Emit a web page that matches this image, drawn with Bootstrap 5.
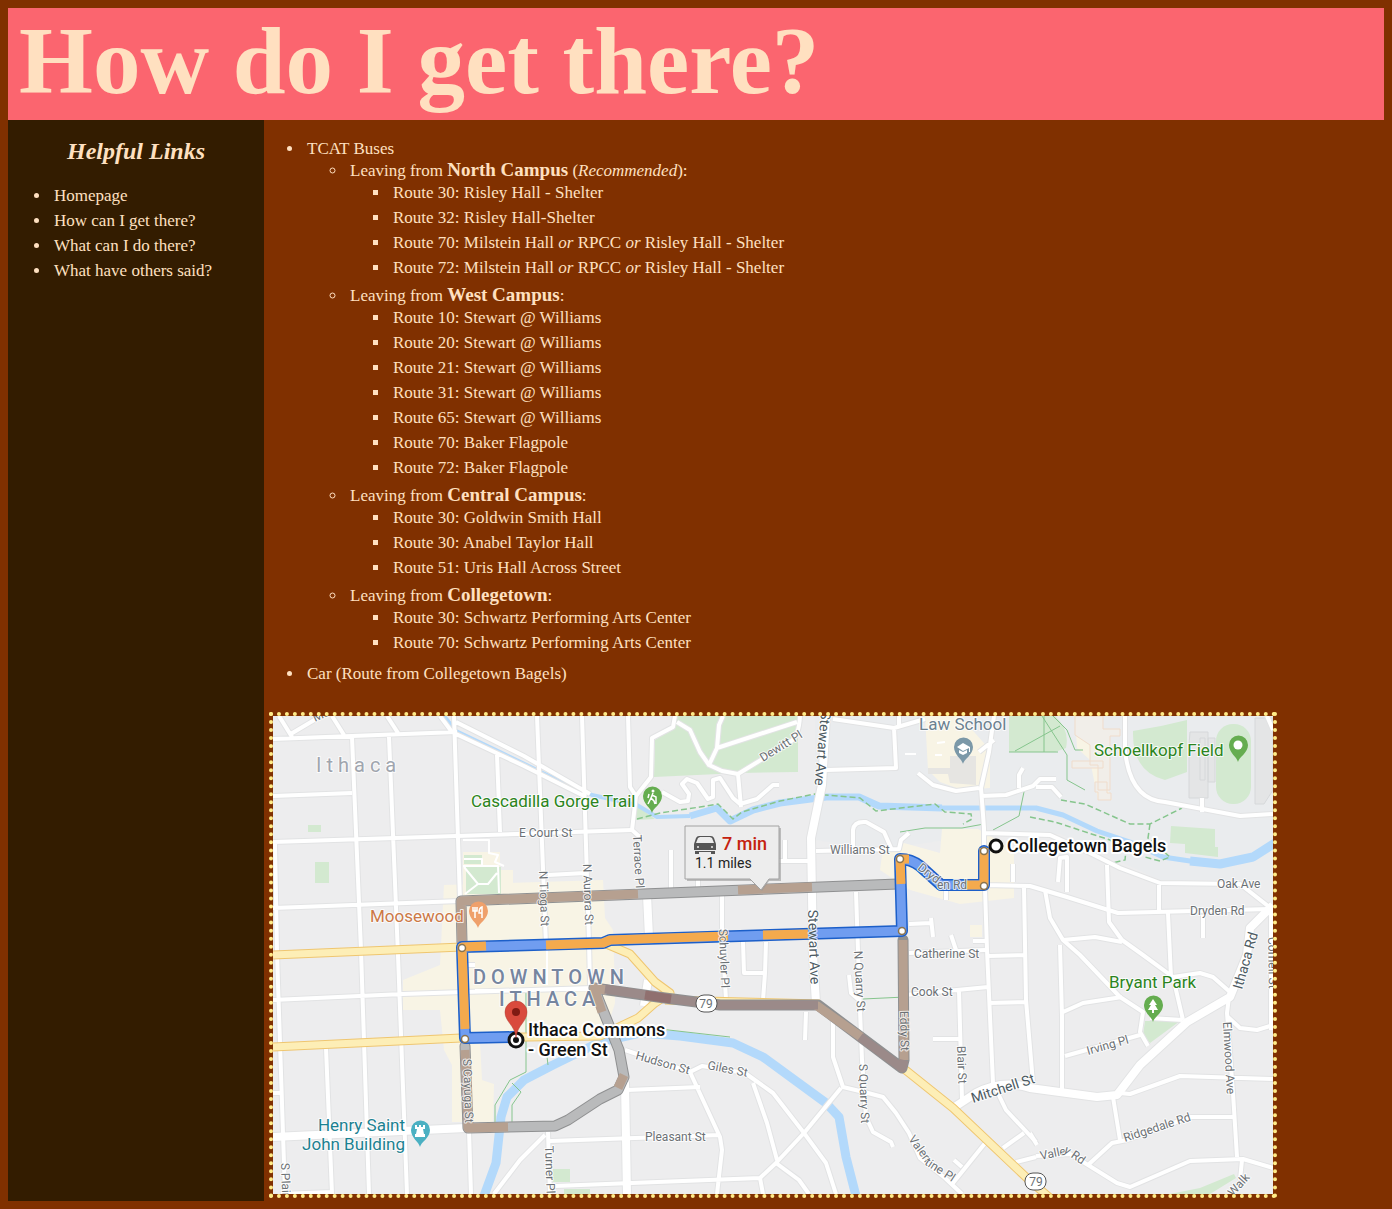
<!DOCTYPE html>
<html lang="en">
<head>
<meta charset="utf-8">
<meta name="viewport" content="width=device-width, initial-scale=1">
<title>How do I get there?</title>
<link href="https://cdn.jsdelivr.net/npm/bootstrap@5.3.0/dist/css/bootstrap.min.css" rel="stylesheet">
<style>
  body { background: #803000; color: #ffe0c0; font-family: Georgia, "Liberation Serif", serif; font-size: 17px; line-height: 22px; }
  b { font-size: 19px; line-height: 16px; }
  .banner { background: #fb656f; padding: 0 11px 6px; }
  .banner h1 { font-size: 95px; line-height: 106px; }
  .side { background: #331c00; width: 256px; padding-top: 17px; }
  .side h2 { font-size: 24px; line-height: 28px; margin-bottom: 20px; }
  .side a { color: inherit; }
  .content { padding: 15px 0 3px; min-width: 0; }
  ul { padding-left: 40px; margin: 0; }
  li { padding: 0 3px 3px; }
  .side > ul { padding-left: 43px; }
  .routes { padding: 3px 0 0 40px; margin-bottom: 24px; }
  .routemap { display: block; width: 1008px; max-width: 100%; height: auto; border: 4px dotted #ffeb87; margin-left: 5px; }
  .routemap text { font-family: Roboto, "Liberation Sans", sans-serif; paint-order: stroke; stroke: #fff; stroke-width: 2px; stroke-opacity: .8; stroke-linejoin: round; fill: #6c7175; font-size: 12px; }
  .routemap .t-park { fill: #2b8420; font-size: 17px; }
  .routemap .t-school { fill: #6c8190; }
  .routemap .t-food { fill: #cc7847; }
  .routemap .t-sight { fill: #1b8191; }
  .routemap .t-stop { fill: #111; font-size: 18px; font-weight: 500; stroke-width: 4px; stroke-opacity: 1; }
  .routemap .t-area { fill: #76859f; font-size: 20px; font-weight: 500; letter-spacing: 5px; }
  .routemap .t-city { fill: #a0a5ae; font-size: 20px; letter-spacing: 5px; }
  .routemap .t-major { fill: #4c5a62; font-size: 14px; }
  .routemap .plain { stroke: none; }
  .routemap .t-time { fill: #c5220f; font-size: 18px; font-weight: 500; }
  .routemap .t-miles { fill: #222; font-size: 14px; }
</style>
<script src="https://cdn.jsdelivr.net/npm/bootstrap@5.3.0/dist/js/bootstrap.bundle.min.js"></script>
</head>
<body class="p-2">
<header class="banner"><h1 class="fw-bold m-0">How do I get there?</h1></header>
<div class="d-flex align-items-stretch">
  <nav class="side flex-shrink-0" aria-label="Helpful links">
    <h2 class="text-center fst-italic fw-bold">Helpful Links</h2>
    <ul>
      <li><a class="text-decoration-none" href="#home">Homepage</a></li>
      <li><a class="text-decoration-none" href="#how">How can I get there?</a></li>
      <li><a class="text-decoration-none" href="#what">What can I do there?</a></li>
      <li><a class="text-decoration-none" href="#reviews">What have others said?</a></li>
    </ul>
  </nav>
  <main class="content flex-grow-1">
    <ul class="routes">
      <li>TCAT Buses
        <ul>
          <li>Leaving from <b>North Campus</b> (<i>Recommended</i>):
            <ul>
              <li>Route 30: Risley Hall - Shelter</li>
              <li>Route 32: Risley Hall-Shelter</li>
              <li>Route 70: Milstein Hall <i>or</i> RPCC <i>or</i> Risley Hall - Shelter</li>
              <li>Route 72: Milstein Hall <i>or</i> RPCC <i>or</i> Risley Hall - Shelter</li>
            </ul>
          </li>
          <li>Leaving from <b>West Campus</b>:
            <ul>
              <li>Route 10: Stewart @ Williams</li>
              <li>Route 20: Stewart @ Williams</li>
              <li>Route 21: Stewart @ Williams</li>
              <li>Route 31: Stewart @ Williams</li>
              <li>Route 65: Stewart @ Williams</li>
              <li>Route 70: Baker Flagpole</li>
              <li>Route 72: Baker Flagpole</li>
            </ul>
          </li>
          <li>Leaving from <b>Central Campus</b>:
            <ul>
              <li>Route 30: Goldwin Smith Hall</li>
              <li>Route 30: Anabel Taylor Hall</li>
              <li>Route 51: Uris Hall Across Street</li>
            </ul>
          </li>
          <li>Leaving from <b>Collegetown</b>:
            <ul>
              <li>Route 30: Schwartz Performing Arts Center</li>
              <li>Route 70: Schwartz Performing Arts Center</li>
            </ul>
          </li>
        </ul>
      </li>
      <li>Car (Route from Collegetown Bagels)</li>
    </ul>
    <svg class="routemap" viewBox="273 716 1000 478" role="img" aria-label="Driving route from Collegetown Bagels to Ithaca Commons">
      <defs>
        <path id="pin" d="M0 0C-1-5-9-9-9-17a9.500 9.500 0 0 1 19 0C10-9 1-5 0 0z"/>
        <g id="minor">
          <path d="M273 739L457 732M279 716L292 737M289 735L321 716M332 716L344 735M387 716L398 733M440 716L452 732M352 737L361 950L369 1194M389 737L398 955L407 1194M273 796L352 793M273 842L517 834L632 830M273 908L460 901M275 842L277 952L285 1194M273 1000L403 994L592 988M326 1048L332 1194M273 1093H280M469 1130L471 1194M545 1135L520 1160L494 1194M281 1194L332 1192"/>
          <path d="M454 716L460 900M456 722L524 756L590 794M456 734L524 766L586 797M497 755L500 832M537 716L546 945M582 716L589 942L590 985M628 716L630 787L636 796L632 830L641 838M675 716L673 727L652 738L651 777L636 796M548 875L585 873M671 850V888M698 890V880M722 895V930L726 1000M743 942L744 973H765L766 942M765 973L763 1000"/>
          <path d="M677 722L690 730L700 752L709 765L722 771L738 774L741 807M723 716L719 725L717 748L709 765M717 748L797 722M738 774L790 742Q799 737 800 716M662 792L680 802L688 801L689 794L682 784L687 779L697 783L708 799L713 797V780L720 778L733 798L740 804L757 799L773 785H779"/>
          <path d="M833 719L894 728L896 768L826 770M894 728L925 719M899 716V727M994 716L989 752L981 788L984 828V850L985 888L987 950L993 1083L1006 1110L1036 1142M918 773L933 785L956 791L979 788M981 796L1006 795L1033 786L1040 779H1056M1036 787H1052L1061 797M1023 768L1019 775V788M979 752L994 740M816 851L899 849L901 840L909 833M891 848L884 832L866 822Q854 821 853 830V848M785 840V861M776 861H812M984 833L1050 835L1090 853L1120 868L1160 883L1240 884L1268 906M985 885L1030 886L1067 897L1118 913L1270 909M1024 887L1026 1000L1033 1083M1013 864V882M946 890V900M856 892L860 1010L862 1060L866 1117L873 1132L891 1142L893 1147M909 924L931 923M931 918L933 937M951 935L956 950M973 941H986M909 953L985 950M988 956L1025 955M905 995L988 987M989 1003L1026 1002M959 990L962 1100M933 1039H959"/>
          <path d="M1107 865L1109 922L1122 940L1143 955L1173 977L1183 1020M1159 885V910M1168 913L1171 977M1045 890L1050 918L1063 940L1080 955L1120 997L1143 1012L1140 1032L1148 1046M1063 940L1095 937L1122 942M1060 945L1062 1017V1090M1058 882L1060 858L1067 857V892M1203 915V938M1063 1012L1083 1003L1122 997M1065 1056L1140 1035M1150 1018L1183 1020M1173 977L1200 973L1213 977L1230 992M1229 997L1227 1013L1233 1093L1237 1157M1228 1017L1240 1028L1257 1030L1273 1025M1120 1093L1130 1094L1180 1076L1273 1079M1113 1097L1120 1140M1088 1165L1112 1143L1127 1140L1190 1117H1233M1036 1156L1070 1154L1088 1165L1117 1183L1130 1187L1190 1161L1243 1159L1273 1168M1242 1160L1240 1180M1030 1133L1037 1145M1271 910V1030M1125 716V750Q1130 800 1165 802L1240 816L1273 814M1202 798V812M1267 716L1273 730"/>
          <path d="M833 1015V1057L843 1087L868 1093L883 1097L896 1113L909 1133L920 1158L945 1178L962 1194M841 1088L804 1133L776 1163L760 1178L763 1194M776 1163L799 1180L809 1194M986 1142L953 1183M954 1160L962 1167M1003 1148L1024 1133M1016 1162L1036 1157M806 1012L805 1040M849 975L851 993L859 1000M627 1090L700 1087M625 1050L690 1072L720 1137L722 1150L717 1194M690 1072L702 1066L745 1073L773 1093L804 1133L826 1163L836 1194M753 1083L767 1123L777 1160M550 1141L720 1135M555 1186L760 1178M548 1132L550 1194M463 965H475"/>
        </g>
        <g id="major">
          <path d="M273 1137L466 1128M826 716L822 785L811 838L813 955L816 1003M953 1108L976 1093Q1003 1079 1030 1088L1067 1093L1097 1097L1117 1095L1140 1065L1187 1022L1230 997L1247 955L1250 928L1273 905M625 1082L627 1194M647 895L649 937M648 980L644 1006"/>
        </g>
        <g id="highway">
          <path d="M273 955L462 947M273 1047L461 1038L600 1036L638 1018L655 1003L670 993L655 982L630 954L604 943M903 1068L953 1108L1029 1180L1050 1198M665 1000L820 1004"/>
        </g>
      </defs>
      <rect x="273" y="716" width="1000" height="478" fill="#ededee"/>
      <path fill="#eaecee" d="M815 716H1273V880L1160 880L1060 834H985L880 850L815 840z"/>
      <!-- commercial areas and parks -->
      <path fill="#f8f4e5" d="M444 885L603 880L605 918L613 930L615 988V1003L605 1035L480 1042L482 1080L494 1084L493 1122L452 1122V1065L444 1050L440 1010H403V980L440 965zM463 852H500V870H513V895H463zM925 716H960L990 750V788L962 790L940 782L928 770zM904 843L940 853L942 829H978L1014 850V898L960 904L910 890L880 870L882 855zM970 925H982V937H970zM1075 716H1100V770L1112 800H1098L1090 760L1077 748z"/>
      <path fill="#e6e5e2" d="M928 768H950V756H976V785L950 783L948 774H928z"/>
      <g fill="#d3e9d0">
        <path d="M677 716L675 727L655 740L654 777L740 773L798 772V716zM308 825h13v7h-13zM315 862h14v21h-14zM464 855h18v9h-18zM466 867H501V894H466zM1009 716H1055Q1070 730 1066 748L1055 752H1009zM1133 731Q1160 727 1187 720V772L1165 780Q1132 772 1133 731zM1171 826L1215 829V847H1218V857L1185 853V844L1170 843zM1145 1021L1180 1021L1150 1043L1143 1035zM1170 1194L1200 1188L1234 1174L1236 1178L1210 1194zM553 1169h17v13h-17zM564 1189h26v5h-26zM637 806L655 819L635 820z"/>
        <rect x="1216" y="724" width="35" height="80" rx="17"/>
      </g>
      <g fill="#f1eee9" stroke="#f0dccb"><path d="M1075 716H1103V729H1120V736H1110V790H1098V765H1090V745L1075 735zM1072 761H1103V768H1072zM1095 782H1107V793H1111V800H1098V792H1095z"/></g>
      <g fill="#e4e5e6" stroke="#d6d8da"><path d="M1190 732H1208V798H1189V745zM1208 738H1215V782H1208zM1255 718H1273V790L1264 804H1255zM1200 738H1205V780H1200z"/></g>
      <!-- water -->
      <g fill="none" stroke="#b3d9fb" stroke-linejoin="round">
        <path stroke-width="4" d="M444 716L456 731L500 752L543 773L592 795L637 805L657 817L690 816"/>
        <path stroke-width="7" d="M690 816L717 808L730 821L753 810L780 803L826 797L859 797L879 806L942 808"/>
        <path stroke-width="5" d="M942 808L1036 808L1063 815L1097 831L1130 842L1163 857L1217 865"/>
        <path stroke-width="9" d="M1190 861L1220 864L1253 857L1275 843M484 1196L496 1163L501 1117L507 1097L524 1080L553 1065L600 1042L640 1033L680 1036L733 1043L763 1057L826 1103L839 1117L846 1157L856 1196"/>
      </g>
      <!-- footpaths -->
      <g fill="none" stroke="#86c58d">
        <path stroke-dasharray="6 3" stroke-width="1.500" d="M637 819L660 813L700 807L718 804L733 819L742 812L780 801L815 794L860 798L876 811L935 804L945 812L971 814L972 819L963 824M1061 800L1085 804L1130 824H1150L1182 808M1150 824L1148 838L1170 857L1160 861L1145 857M1030 817L1055 822L1110 840L1126 850L1125 860L1112 863"/>
        <path d="M900 832L925 828L962 828L984 824M993 830L1019 816L1025 787M1009 752H1058M1044 716V752M1015 751L1060 726M1042 716L1067 755V780L1085 790M1053 716L1067 730L1075 750H1083M526 990V1072L510 1080L495 1105V1125M545 1040L548 1065M660 1029L730 1037M863 999L905 997M512 1083L521 1092L512 1105V1125"/>
      </g>
      <g fill="none" stroke-linejoin="round">
        <use href="#minor" stroke="#e2e3e4" stroke-width="6"/>
        <use href="#major" stroke="#e2e3e4" stroke-width="10"/>
        <use href="#minor" stroke="#fff" stroke-width="4"/>
        <use href="#major" stroke="#fff" stroke-width="8"/>
        <use href="#highway" stroke="#efc670" stroke-width="9"/>
        <use href="#highway" stroke="#fdeeb6" stroke-width="7"/>
        <path stroke="#fff" stroke-width="2" d="M463 840H489V853L498 855L495 862L504 866M464 859H482V866M463 866H498L499 893M464 867L478 884H488L497 873M478 884L465 894M547 950V985M475 990H590M937 743L945 742M905 754H916M935 755H942"/>
      </g>
      <!-- alternative routes -->
      <g fill="none" stroke-linejoin="round" stroke-linecap="round">
        <path stroke="#8f9091" stroke-width="11" d="M462 942L461 901L898 884M465 1046L468 1128L555 1126L568 1120L600 1099L618 1090L624 1077L619 1050L594 988L665 998L720 1005L818 1005L902 1068L904 1060L903 940"/>
        <path stroke="#b9babb" stroke-width="9" d="M462 942L461 901L898 884M465 1046L468 1128L555 1126L568 1120L600 1099L618 1090L624 1077L619 1050L594 988L605 990"/>
        <g stroke-linecap="butt" stroke-width="9">
          <path stroke="#b6a090" d="M462 942L461 901L638 894M738 890L812 887M465 1050L468 1128L508 1127M618 1088L624 1075M602 1012L594 988L606 990M816 1005L861 1037M904 1060L903 940"/>
          <path stroke="#9b8a89" d="M605 989L665 998L720 1005L818 1005M860 1037L902 1068L904 1060"/>
          <path stroke="#90706f" d="M645 995L671 999"/>
        </g>
      </g>
      <!-- chosen route -->
      <g fill="none" stroke-linejoin="round">
        <path stroke="#1c5fc9" stroke-width="12" stroke-linecap="round" d="M984 851V885H941L920 866Q911 859 900 859L902 931L610 940L603 943L462 947L465 1038L515 1037"/>
        <path stroke="#709df0" stroke-width="9" stroke-linecap="round" d="M984 851V885H941L920 866Q911 859 900 859L902 931L610 940L603 943L462 947L465 1038L515 1037"/>
        <path stroke="#f4aa4d" stroke-width="9" d="M984 848V885H966M909 859L900 859L901 884M808 934L763 935M728 936L610 940L603 943L546 945M486 946L462 947L465 1029"/>
      </g>
      <g fill="#fff" stroke="#8a744f" stroke-width="1.500"><circle cx="984" cy="851" r="3.500"/><circle cx="984" cy="886" r="3.500"/><circle cx="900" cy="859" r="3.500"/><circle cx="902" cy="931" r="3.500"/><circle cx="462" cy="948" r="3.500"/><circle cx="465" cy="1039" r="3.500"/></g>
      <!-- street names -->
      <text class="t-city" x="316" y="772">Ithaca</text>
      <text x="519" y="837">E Court St</text>
      <text transform="translate(315 722) rotate(-25)">Ma</text>
      <text transform="translate(633 835) rotate(87)">Terrace Pl</text>
      <text transform="translate(539 871) rotate(88)">N Tioga St</text>
      <text transform="translate(583 864) rotate(88)">N Aurora St</text>
      <text transform="translate(763 762) rotate(-32)">Dewitt Pl</text>
      <text class="t-major" transform="translate(821 711) rotate(95)">Stewart Ave</text>
      <text class="t-major" transform="translate(808 910) rotate(88)">Stewart Ave</text>
      <text transform="translate(719 929) rotate(88)">Schuyler Pl</text>
      <text x="830" y="854">Williams St</text>
      <text transform="translate(917 869) rotate(38)">Dryd</text>
      <text x="937" y="889">en Rd</text>
      <text x="914" y="958">Catherine St</text>
      <text x="911" y="996">Cook St</text>
      <text transform="translate(854 951) rotate(87)">N Quarry St</text>
      <text transform="translate(859 1064) rotate(88)">S Quarry St</text>
      <text transform="translate(900 1011) rotate(89)">Eddy St</text>
      <text transform="translate(957 1046) rotate(88)">Blair St</text>
      <text class="t-major" transform="translate(973 1103) rotate(-18)">Mitchell St</text>
      <text transform="translate(908 1139) rotate(54)">Valen</text>
      <text transform="translate(924 1164) rotate(33)">tine Pl</text>
      <text x="1217" y="888">Oak Ave</text>
      <text x="1190" y="915">Dryden Rd</text>
      <text class="t-major" transform="translate(1242 990) rotate(-74)">Ithaca Rd</text>
      <text transform="translate(1268 937) rotate(89)">Cornell St</text>
      <text transform="translate(1223 1022) rotate(87)">Elmwood Ave</text>
      <text transform="translate(1088 1055) rotate(-16)">Irving Pl</text>
      <text transform="translate(1125 1142) rotate(-18)">Ridgedale Rd</text>
      <text transform="translate(1041 1160) rotate(-12)">Valle</text>
      <text transform="translate(1063 1152) rotate(34)">y Rd</text>
      <text transform="translate(1233 1197) rotate(-48)">Walk</text>
      <text x="645" y="1141">Pleasant St</text>
      <text transform="translate(635 1059) rotate(16)">Hudson St</text>
      <text transform="translate(707 1069) rotate(11)">Giles St</text>
      <text transform="translate(545 1146) rotate(88)">Turner Pl</text>
      <text transform="translate(463 1059) rotate(88)">S Cayuga St</text>
      <text transform="translate(281 1163) rotate(88)">S Plain St</text>
      <text class="t-area" x="473" y="984">DOWNTOWN</text>
      <text class="t-area" x="499" y="1006">ITHACA</text>
      <!-- route shields -->
      <g fill="#fff" stroke="#555"><rect x="696" y="995" width="21" height="17" rx="8"/><rect x="1025" y="1173" width="21" height="17" rx="8"/></g>
      <text class="plain" x="706" y="1008" text-anchor="middle">79</text>
      <text class="plain" x="1036" y="1186" text-anchor="middle">79</text>
      <!-- places -->
      <text class="t-park" x="471" y="807">Cascadilla Gorge Trail</text>
      <text class="t-park" x="1094" y="756">Schoellkopf Field</text>
      <text class="t-park" x="1109" y="988">Bryant Park</text>
      <text class="t-park t-school" x="919" y="730">Law School</text>
      <text class="t-park t-food" x="370" y="922">Moosewood</text>
      <text class="t-park t-sight" x="405" y="1131" text-anchor="end">Henry Saint</text>
      <text class="t-park t-sight" x="405" y="1150" text-anchor="end">John Building</text>
      <g transform="translate(652 813)"><use href="#pin" fill="#65ad50"/><path fill="none" stroke="#fff" stroke-width="1.500" d="M1-20L-1-15L2-12L3-9M-1-15L-4-9M0-18L4-16V-9M-3-19L-4-15"/><circle cx="1" cy="-22" r="1.500" fill="#fff"/></g>
      <g transform="translate(1238 762)"><use href="#pin" fill="#65ad50"/><circle cy="-17" r="4.500" fill="#fff"/></g>
      <g transform="translate(1153 1022)"><use href="#pin" fill="#65ad50"/><path fill="#fff" d="M0-23L4-17H2L5-12H1V-9H-1V-12H-5L-2-17H-4z"/></g>
      <g transform="translate(963 764)"><use href="#pin" fill="#7b98a8"/><path fill="#fff" d="M0-21L7-17V-12H6V-16L0-13L-6-17zM-4-14L0-12L4-14V-11L0-9L-4-11z"/></g>
      <g transform="translate(478 928)"><use href="#pin" fill="#efa06b"/><path fill="none" stroke="#fff" stroke-width="1.500" d="M-3-21V-10M-5-21V-17H-1V-21M4-10V-21Q1-20 1-15H4"/></g>
      <g transform="translate(420 1147)"><use href="#pin" fill="#4bb0c2"/><path fill="#fff" d="M-5-22H-3V-20H-1V-22H1V-20H3V-22H5V-18H3L4-13H5V-10H-5V-13H-4L-3-18H-5z"/></g>
      <!-- travel time callout -->
      <path fill="#999" opacity=".6" d="M687 828H781V881H769L762 891L752 881H687z"/>
      <path fill="#ededed" stroke="#a2a2a2" d="M685 826H779V879H769L761 890L750 879H685z"/>
      <path fill="#555" d="M699 836h12q2 0 3 2l2 6v6h-1v4h-4v-2h-12v2h-4v-4h-1v-6l2-6q1-2 3-2z"/>
      <path fill="#ededed" d="M700 837h10l2 1l2 5h-18l2-5zM695 850h20v1h-20z"/>
      <g fill="#ededed"><circle cx="698" cy="847" r="1"/><circle cx="712" cy="847" r="1"/></g>
      <text class="plain t-time" x="722" y="850">7 min</text>
      <text class="plain t-miles" x="695" y="868">1.1 miles</text>
      <!-- start and end -->
      <circle cx="996" cy="846" r="6" fill="#fff" stroke="#111" stroke-width="3"/>
      <text class="t-stop" x="1007" y="852">Collegetown Bagels</text>
      <circle cx="516" cy="1040" r="7" fill="#fff" stroke="#111" stroke-width="3"/><circle cx="516" cy="1040" r="3" fill="#111"/>
      <path fill="#d94a3d" stroke="#b03a30" stroke-width=".5" d="M516 1038C515 1025 505 1022 505 1012a11 11 0 0 1 22 0C527 1022 517 1025 516 1038z"/><circle cx="516" cy="1012" r="4" fill="#801a13"/>
      <text class="t-stop" x="528" y="1036">Ithaca Commons</text>
      <text class="t-stop" x="528" y="1056">- Green St</text>
    </svg>
  </main>
</div>
</body>
</html>
